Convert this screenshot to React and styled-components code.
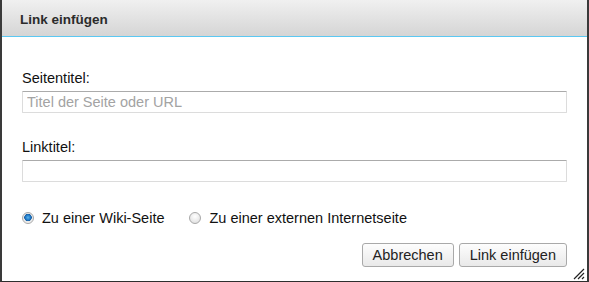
import styled, { createGlobalStyle } from "styled-components";

const GlobalStyle = createGlobalStyle`
  html, body {
    margin: 0;
    padding: 0;
    background: #ffffff;
  }
  body {
    font-family: "Liberation Sans", Arial, sans-serif;
    font-size: 14.5px;
    color: #222;
  }
`;

const Dialog = styled.div`
  box-sizing: border-box;
  width: 589px;
  height: 282px;
  background: #fff;
  border-left: 2px solid #3a3a3a;
  border-right: 2px solid #3a3a3a;
  border-bottom: 1px solid #2e2e2e;
  display: flex;
  flex-direction: column;
  position: relative;
`;

const Header = styled.div`
  height: 36px;
  flex-shrink: 0;
  display: flex;
  align-items: center;
  padding: 0 18px;
  background: linear-gradient(to bottom, #f0f0f0, #d5d5d5);
  border-bottom: 1px solid #5cc8f2;
`;

const Title = styled.h1`
  margin: 0;
  font-size: 13.5px;
  font-weight: bold;
  color: #2b2b2b;
  padding-top: 2px;
`;

const Body = styled.div`
  flex: 1;
  display: flex;
  flex-direction: column;
  padding: 33px 20px 0 20px;
`;

const Field = styled.div`
  display: flex;
  flex-direction: column;
  gap: 4px;
  margin-bottom: ${(p) => p.$space}px;
`;

const Label = styled.label`
  line-height: 17px;
  color: #111;
`;

const TextInput = styled.input`
  box-sizing: border-box;
  width: 545px;
  height: 22px;
  margin: 0;
  padding: 0 4px;
  font-family: "Liberation Sans", Arial, sans-serif;
  font-size: 14.5px;
  border: 1px solid #dcdcdc;
  border-top-color: #ababab;
  border-radius: 1px;
  outline: none;
  &::placeholder {
    color: #a3a3a3;
  }
`;

const RadioRow = styled.div`
  display: flex;
  align-items: center;
  gap: 25px;
  height: 17px;
  margin-top: 1px;
`;

const RadioOption = styled.label`
  display: flex;
  align-items: center;
  gap: 8px;
  color: #111;
`;

const RadioDot = styled.span`
  box-sizing: border-box;
  width: 12px;
  height: 12px;
  border-radius: 50%;
  border: 1px solid #a8a8a8;
  background: ${(p) =>
    p.$checked
      ? "radial-gradient(circle at 50% 45%, #5ab4ea 0, #1f78c8 2.5px, #1a5fa0 3.5px, #e6e6e6 4px, #f8f8f8 6px)"
      : "radial-gradient(circle at 50% 35%, #ffffff 0, #e4e4e4 6px)"};
`;

const Actions = styled.div`
  display: flex;
  justify-content: flex-end;
  gap: 5px;
  margin-top: 17px;
`;

const Button = styled.button`
  box-sizing: border-box;
  height: 24px;
  padding: 0 10px;
  font-family: "Liberation Sans", Arial, sans-serif;
  font-size: 14.5px;
  color: #222;
  border: 1px solid #a9a9a9;
  border-radius: 3px;
  background: linear-gradient(to bottom, #fdfdfd, #e9e9e9);
  cursor: pointer;
`;

const Grip = styled.svg`
  position: absolute;
  right: 2px;
  bottom: 1px;
`;

export default function App() {
  return (
    <>
      <GlobalStyle />
      <Dialog>
        <Header>
          <Title>Link einfügen</Title>
        </Header>
        <Body>
          <Field $space={26}>
            <Label>Seitentitel:</Label>
            <TextInput placeholder="Titel der Seite oder URL" />
          </Field>
          <Field $space={26}>
            <Label>Linktitel:</Label>
            <TextInput />
          </Field>
          <RadioRow>
            <RadioOption>
              <RadioDot $checked />
              Zu einer Wiki-Seite
            </RadioOption>
            <RadioOption>
              <RadioDot />
              Zu einer externen Internetseite
            </RadioOption>
          </RadioRow>
          <Actions>
            <Button>Abbrechen</Button>
            <Button>Link einfügen</Button>
          </Actions>
        </Body>
        <Grip width="12" height="12" viewBox="0 0 12 12">
          <path d="M11 1 L1 11 M11 5 L5 11 M11 9 L9 11" stroke="#222" strokeWidth="1.2" />
        </Grip>
      </Dialog>
    </>
  );
}
